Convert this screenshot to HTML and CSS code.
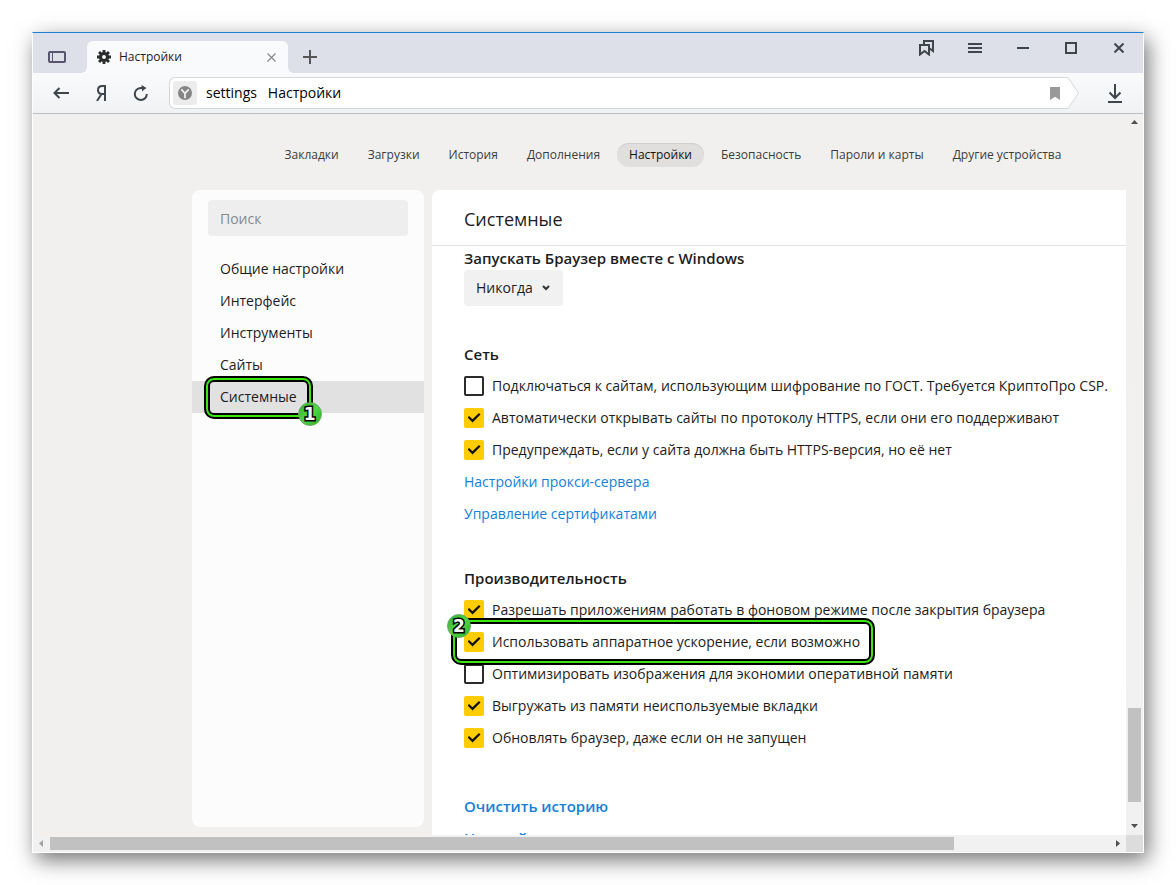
FILE: index.html
```html
<!DOCTYPE html>
<html lang="ru">
<head>
<meta charset="utf-8">
<title>Настройки</title>
<link rel="stylesheet" href="styles.css">
</head>
<body>
<div class="window">
  <header class="titlebar">
    <button class="panel-btn" aria-label="Боковая панель">
      <svg width="18" height="12" viewBox="0 0 18 12" fill="none" stroke="#59556f"><rect x="1" y="1" width="16" height="10" rx="1" stroke-width="2"/><path d="M4.500 1v10" stroke-width="1"/></svg>
    </button>
    <div class="tab">
      <svg width="14" height="14" viewBox="0 0 14 14"><g stroke="#2b2b2b" stroke-width="2.800"><path d="M7 0v14M0 7h14M2.050 2.050l9.900 9.900M11.950 2.050l-9.900 9.900"/></g><circle cx="7" cy="7" r="5" fill="#2b2b2b"/><circle cx="7" cy="7" r="2" fill="#f9fafb"/></svg>
      <span class="tab-title">Настройки</span>
      <button class="tab-close" aria-label="Закрыть вкладку"><svg width="9" height="9" viewBox="0 0 9 9" stroke="#858585" stroke-width="1.100"><path d="M.5.5l8 8M8.500.5l-8 8"/></svg></button>
    </div>
    <button class="new-tab" aria-label="Новая вкладка"><svg width="14" height="14" viewBox="0 0 14 14" stroke="#555" stroke-width="2"><path d="M7 0v14M0 7h14"/></svg></button>
    <div class="controls">
      <button aria-label="Коллекции"><svg width="16" height="16" viewBox="0 0 16 16" fill="none" stroke="#3e454b" stroke-width="2"><path d="M1 5h9v9.500l-4.500-3.500L1 14.500z"/><path d="M5 5V1h9v10l-4-3"/></svg></button>
      <button aria-label="Меню"><svg width="14" height="10" viewBox="0 0 14 10" stroke="#3e454b" stroke-width="2"><path d="M0 1h14M0 5h14M0 9h14"/></svg></button>
      <button aria-label="Свернуть"><svg width="12" height="12" viewBox="0 0 12 12" stroke="#3e454b" stroke-width="2"><path d="M0 6h12"/></svg></button>
      <button aria-label="Развернуть"><svg width="12" height="12" viewBox="0 0 12 12" fill="none" stroke="#3e454b" stroke-width="2"><path d="M1 1h10v10H1z"/></svg></button>
      <button aria-label="Закрыть"><svg width="10" height="10" viewBox="0 0 10 10" stroke="#3e454b" stroke-width="2"><path d="M.5.5l9 9M9.500.5l-9 9"/></svg></button>
    </div>
  </header>

  <div class="toolbar">
    <button aria-label="Назад"><svg width="16" height="12" viewBox="0 0 16 12" fill="none" stroke="#3e454b" stroke-width="2"><path d="M16 6H1.500M6.500 1l-5 5 5 5"/></svg></button>
    <button aria-label="Яндекс"><svg width="10" height="16" viewBox="0 0 10 16" fill="none" stroke="#3e454b" stroke-width="2"><path d="M9 16V1H6.500C3.500 1 2 2.600 2 5s1.500 4 4 4h3M5.500 9L1 16"/></svg></button>
    <button aria-label="Обновить"><svg width="16" height="16" viewBox="0 0 16 16" fill="none" stroke="#3e454b" stroke-width="2"><path d="M9.500 3H7.500a6 6 0 1 0 6.300 6"/><path d="M8.500 0l5 3-4.500 3.300z" fill="#3e454b" stroke="none"/></svg></button>
    <div class="address">
      <div class="address-box">
        <span class="site-icon"><svg width="14" height="14" viewBox="0 0 15 15"><circle cx="7.500" cy="7.500" r="7.500" fill="#858585"/><path d="M3.500 3.500l4 4.500 4-4.500M7.500 8v5" fill="none" stroke="#ececec" stroke-width="2"/></svg></span>
        <input class="address-input" type="text" aria-label="Адрес" value="settings   Настройки">
        <button class="bookmark" aria-label="Добавить закладку"><svg width="10" height="13" viewBox="0 0 10 13"><path d="M0 0h10v13L5 9.800 0 13z" fill="#999"/></svg></button>
      </div>
      <svg class="address-tip" width="11" height="32" viewBox="0 0 11 32"><path d="M0 .5L10.500 16 0 31.500" fill="#fff" stroke="#d6d8da"/></svg>
    </div>
    <button class="download" aria-label="Загрузки"><svg width="14" height="19" viewBox="0 0 14 19" fill="none" stroke="#3e454b" stroke-width="2"><path d="M7 0v14.500M1.500 8.500L7 14l5.500-5.500M0 18h14"/></svg></button>
  </div>

  <div class="viewport">
    <div class="page">
      <nav class="tabs">
        <a href="#bookmarks">Закладки</a>
        <a href="#downloads">Загрузки</a>
        <a href="#history">История</a>
        <a href="#addons">Дополнения</a>
        <a href="#settings" class="current">Настройки</a>
        <a href="#security">Безопасность</a>
        <a href="#passwords">Пароли и карты</a>
        <a href="#devices">Другие устройства</a>
      </nav>
      <div class="panels">
        <aside class="sidebar">
          <input class="search" type="text" placeholder="Поиск" aria-label="Поиск">
          <nav class="menu">
            <a href="#general">Общие настройки</a>
            <a href="#interface">Интерфейс</a>
            <a href="#tools">Инструменты</a>
            <a href="#sites">Сайты</a>
            <a href="#system" class="selected"><span class="marked">Системные<span class="ring ring-menu"></span><span class="badge badge-end">1</span></span></a>
          </nav>
        </aside>
        <main class="content">
          <h1>Системные</h1>
          <div class="sections">
            <section>
              <h2 class="tight"><label for="autorun">Запускать Браузер вместе с Windows</label></h2>
              <div class="dropdown">
                <select id="autorun"><option>Никогда</option></select>
                <svg width="8" height="6" viewBox="0 0 8 6" fill="none" stroke="#333" stroke-width="2"><path d="M1 1l3 3 3-3"/></svg>
              </div>
            </section>
            <section>
              <h2>Сеть</h2>
              <label class="option"><input type="checkbox">Подключаться к сайтам, использующим шифрование по ГОСТ. Требуется КриптоПро CSP.</label>
              <label class="option"><input type="checkbox" checked>Автоматически открывать сайты по протоколу HTTPS, если они его поддерживают</label>
              <label class="option"><input type="checkbox" checked>Предупреждать, если у сайта должна быть HTTPS-версия, но её нет</label>
              <a class="link" href="#proxy">Настройки прокси-сервера</a>
              <a class="link" href="#certificates">Управление сертификатами</a>
            </section>
            <section>
              <h2>Производительность</h2>
              <label class="option"><input type="checkbox" checked>Разрешать приложениям работать в фоновом режиме после закрытия браузера</label>
              <label class="option marked"><input type="checkbox" checked>Использовать аппаратное ускорение, если возможно<span class="ring ring-option"></span><span class="badge badge-start">2</span></label>
              <label class="option"><input type="checkbox">Оптимизировать изображения для экономии оперативной памяти</label>
              <label class="option"><input type="checkbox" checked>Выгружать из памяти неиспользуемые вкладки</label>
              <label class="option"><input type="checkbox" checked>Обновлять браузер, даже если он не запущен</label>
            </section>
            <section class="last">
              <a class="link strong" href="#clear">Очистить историю</a>
              <a class="link strong" href="#reset">Настройки</a>
            </section>
          </div>
        </main>
      </div>
    </div>
    <div class="vbar">
      <svg width="7" height="4" viewBox="0 0 7 4"><path d="M0 4l3.500-4L7 4z" fill="#505050"/></svg>
      <span class="vspace"></span><span class="vthumb"></span><span class="vrest"></span>
      <svg width="7" height="4" viewBox="0 0 7 4"><path d="M0 0l3.500 4L7 0z" fill="#505050"/></svg>
    </div>
    <div class="hbar">
      <svg width="4" height="7" viewBox="0 0 4 7"><path d="M4 0L0 3.500 4 7z" fill="#a3a3a3"/></svg>
      <span class="hthumb"></span><span class="hrest"></span>
      <svg width="4" height="7" viewBox="0 0 4 7"><path d="M0 0l4 3.500L0 7z" fill="#505050"/></svg>
    </div>
    <div class="corner"></div>
  </div>
</div>
</body>
</html>
```
FILE: styles.css
```css
* { box-sizing: border-box; }
body {
  margin: 0;
  padding: 32px;
  height: 100vh;
  overflow: hidden;
  background: #fff;
  color: #1c1c1c;
  font: 14px/32px "Open Sans", "Noto Sans", sans-serif;
}
button {
  display: flex;
  align-items: center;
  justify-content: center;
  padding: 0;
  border: 0;
  background: none;
}
input, select { font: inherit; color: inherit; }
a { color: inherit; text-decoration: none; }
svg { display: block; flex: none; }

.window {
  display: flex;
  flex-direction: column;
  height: 100%;
  border: 1px solid #fff;
  border-top-color: #1a80d2;
  background: #f1f0ee;
  box-shadow: 4px 7px 20px rgba(0, 0, 0, .55);
}

.titlebar { display: flex; flex: none; height: 40px; background: #dde0e9; }
.panel-btn { width: 48px; padding-top: 8px; }
.tab {
  position: relative;
  display: flex;
  align-items: center;
  gap: 8px;
  width: 201px;
  margin: 8px 0 0 6px;
  padding: 0 12px 0 10px;
  border-radius: 6px 6px 0 0;
  background: #f9fafb;
}
.tab::before, .tab::after {
  content: "";
  position: absolute;
  bottom: 0;
  width: 6px;
  height: 6px;
}
.tab::before { left: -6px; background: radial-gradient(circle at 0 0, transparent 6px, #f9fafb 6px); }
.tab::after { right: -6px; background: radial-gradient(circle at 100% 0, transparent 6px, #f9fafb 6px); }
.tab-title { flex: 1; font-size: 12px; }
.new-tab { width: 44px; padding-top: 8px; }
.controls { display: flex; margin-left: auto; height: 30px; }
.controls button { width: 48px; }

.toolbar {
  display: flex;
  flex: none;
  align-items: center;
  height: 41px;
  padding: 0 8px;
  border-bottom: 1px solid #bcbdbe;
  background: linear-gradient(#f9fafb, #f1f2f4);
}
.toolbar button { width: 40px; height: 32px; }
.address { display: flex; flex: 1; height: 32px; margin: 0 16px 0 8px; }
.address-box {
  display: flex;
  flex: 1;
  align-items: center;
  padding-left: 3px;
  border: 1px solid #d6d8da;
  border-right: 0;
  border-radius: 6px 0 0 6px;
  background: #fff;
}
.site-icon {
  display: grid;
  place-items: center;
  width: 24px;
  height: 24px;
  border-radius: 3px;
  background: #ececec;
}
.address-input {
  flex: 1;
  min-width: 0;
  height: 24px;
  padding: 0 9px;
  border: 0;
  background: none;
  color: #000;
}
.toolbar .bookmark { width: 26px; height: 24px; }

.viewport {
  display: grid;
  flex: 1;
  grid-template-columns: minmax(0, 1fr) 17px;
  grid-template-rows: minmax(0, 1fr) 17px;
  min-height: 0;
}
.page { display: flex; flex-direction: column; overflow: hidden; }
.tabs, .panels { min-width: 1280px; }
.tabs {
  display: flex;
  flex: none;
  justify-content: center;
  gap: 5px;
  padding: 29px 0 23px;
  color: #3c3c3c;
  font-size: 12px;
  line-height: 24px;
}
.tabs a { padding: 0 12px; border-radius: 12px; }
.tabs .current { background: #e0dfdd; color: #111; box-shadow: inset 0 1px #cfcecc; }
.panels { display: flex; flex: 1; justify-content: center; gap: 8px; min-height: 0; }

.sidebar {
  width: 232px;
  margin-bottom: 8px;
  padding-top: 10px;
  border-radius: 8px;
  background: #fcfcfc;
}
.search {
  display: block;
  width: 200px;
  height: 36px;
  margin: 0 16px 17px;
  padding: 0 12px;
  border: 0;
  border-radius: 4px;
  background: #eee;
}
.search::placeholder { color: #898989; }
.menu a { display: block; padding-left: 28px; }
.menu .selected { background: #e1e1e1; }

.content {
  width: 722px;
  overflow: hidden;
  border-radius: 8px 8px 0 0;
  background: #fff;
}
h1, h2 { margin: 0; }
h1 {
  height: 56px;
  padding: 2px 32px 0;
  border-bottom: 1px solid #e2e2e2;
  font-size: 18px;
  font-weight: 400;
  line-height: 55px;
}
h2 { font-size: 15px; font-weight: 600; line-height: 32px; }
h2.tight { line-height: 24px; }
.sections { padding: 0 32px; }
section { display: flex; flex-direction: column; align-items: flex-start; margin-bottom: 32px; white-space: nowrap; }
.last { margin-top: 36px; }
.dropdown { display: grid; align-items: center; }
.dropdown > * { grid-area: 1 / 1; }
.dropdown svg { justify-self: end; margin-right: 13px; pointer-events: none; }
.dropdown select {
  appearance: none;
  height: 36px;
  padding: 0 30px 0 12px;
  border: 0;
  border-radius: 4px;
  background: #f1f1f1;
}
.option { display: flex; align-items: center; gap: 8px; }
.option input {
  appearance: none;
  width: 20px;
  height: 20px;
  margin: 0;
  border: 2px solid #2b2b2b;
  border-radius: 2px;
  background: #fff;
}
.option input:checked {
  display: grid;
  place-items: center;
  border: 0;
  background: #fc0;
}
.option input:checked::before {
  content: "";
  width: 13px;
  height: 10px;
  background: #111;
  clip-path: polygon(0 45%, 12% 30%, 38% 62%, 88% 0, 100% 14%, 39% 95%);
}
.link { color: #1480d8; }
.link.strong { font-size: 15px; font-weight: 600; }

.marked { position: relative; }
span.marked { display: inline-block; }
.ring {
  position: absolute;
  border: 2px solid #000;
  border-radius: 10px;
  box-shadow: inset 0 0 0 2px #3ae80e, inset 0 0 0 4px #000;
  pointer-events: none;
}
.ring-menu { inset: -5px -16px -6px; }
.ring-option { inset: -8px -15px -7px -13px; }
.badge {
  position: absolute;
  width: 24px;
  height: 24px;
  border: 1px solid #66a866;
  border-radius: 50%;
  background: linear-gradient(135deg, #30b030, #54d447 50%, #28b428);
  color: #fff;
  font: 700 17px/22px "DejaVu Sans", sans-serif;
  text-align: center;
  -webkit-text-stroke: 3px #000;
  paint-order: stroke fill;
}
.badge-end { right: -25px; bottom: -13px; }
.badge-start { left: -17px; top: -12px; }

.vbar {
  display: flex;
  flex-direction: column;
  align-items: center;
  padding: 6px 0 7px;
  background: linear-gradient(#f1f0ee, #f1f1f1);
}
.vspace { flex: 584; }
.vthumb { flex: 94; width: 13px; background: #c1c1c1; }
.vrest { flex: 22; }
.hbar { display: flex; align-items: center; padding: 0 6px; background: #f1f1f1; }
.hthumb { flex: 904; height: 13px; margin-left: 7px; background: #c1c1c1; }
.hrest { flex: 162; }
.corner { background: #dcdcdc; }
```
